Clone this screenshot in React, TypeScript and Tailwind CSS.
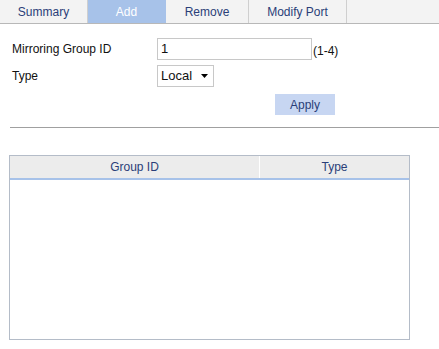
export default function App() {
  const tabs = [
    { label: "Summary", w: "w-[88px]", active: false },
    { label: "Add", w: "w-[78px]", active: true },
    { label: "Remove", w: "w-[83px]", active: false },
    { label: "Modify Port", w: "w-[98px]", active: false },
  ];
  return (
    <div className="w-[439px] h-[349px] bg-white text-[12px] font-['Liberation_Sans',Arial,sans-serif] text-[#111]">
      <div className="flex h-[24px] bg-[#f3f3f3] border-b border-[#b8b8b8]">
        {tabs.map((t) => (
          <div
            key={t.label}
            className={`${t.w} flex items-center justify-center border-r ${
              t.active ? "bg-[#a7c2e9] text-white border-[#a7c2e9]" : "text-[#2a3e78] border-[#cfcfcf]"
            }`}
          >
            {t.label}
          </div>
        ))}
      </div>
      <div className="pt-[14px]">
        <div className="flex items-center h-[22px]">
          <div className="w-[157px] pl-[12px]">Mirroring Group ID</div>
          <div className="w-[155px] h-[22px] border border-[#c8c8c8] flex items-center pl-[3px] text-[13px]">1</div>
          <div className="pl-[1px] pt-[4px]">(1-4)</div>
        </div>
        <div className="flex items-center h-[22px] mt-[5px]">
          <div className="w-[157px] pl-[12px]">Type</div>
          <div className="w-[57px] h-[22px] border border-[#c8c8c8] flex items-center pl-[3px] text-[13px] gap-[9px]">
            <span>Local</span>
            <svg width="7" height="4" viewBox="0 0 7 4"><path d="M0 0h7L3.5 4z" fill="#000" /></svg>
          </div>
        </div>
        <div className="flex mt-[7px]">
          <div className="ml-[275px] w-[60px] h-[21px] bg-[#c7d6f2] text-[#2a3e78] flex items-center justify-center">Apply</div>
        </div>
        <div className="ml-[10px] mt-[12px] h-[1px] bg-[#a0a0a0]" />
      </div>
      <div className="ml-[9px] mt-[27px] w-[401px] h-[185px] border border-[#b4bcc8] flex flex-col">
        <div className="flex h-[24px] bg-[#ececec] border-b-2 border-[#a7c2e9] text-[#2a3e78]">
          <div className="w-[250px] flex items-center justify-center border-r border-white">Group ID</div>
          <div className="flex-1 flex items-center justify-center">Type</div>
        </div>
        <div className="flex-1" />
      </div>
    </div>
  );
}
